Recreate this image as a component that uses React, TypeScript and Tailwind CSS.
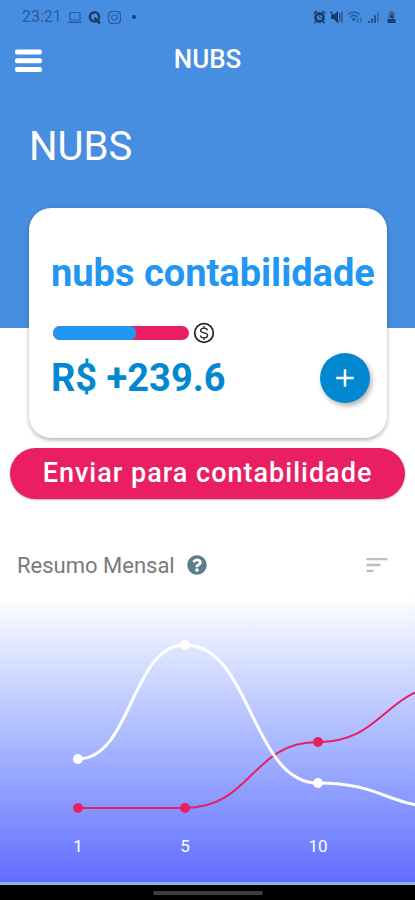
import { FaInstagram, FaQuestionCircle } from "react-icons/fa";
import { MdAdd, MdSort } from "react-icons/md";

const BASELINE = 255;

const POINTS_X = [78, 185, 318, 452];

const DAYS = [
  { label: "1", x: 78 },
  { label: "5", x: 185 },
  { label: "10", x: 318 }
];

const SERIES = [
  { color: "#e91e63", width: 2, values: [211, 211, 145, 88] },
  { color: "#ffffff", width: 3, values: [162, 48, 186, 211] }
];

function smoothPath(values: number[]) {
  return values
    .map((y, i) => {
      const x = POINTS_X[i];
      if (i === 0) return `M${x} ${y}`;
      const mid = (POINTS_X[i - 1] + x) / 2;
      return `C${mid} ${values[i - 1]} ${mid} ${y} ${x} ${y}`;
    })
    .join(" ");
}

function StatusBar() {
  return (
    <div className="flex h-[34px] items-center justify-between pr-[18px] pl-[22px] text-[#2c5c9b]">
      <div className="flex items-center gap-1.5">
        <span className="text-base">23:21</span>
        <svg width="14" height="13" viewBox="0 0 14 13" fill="none" stroke="currentColor" aria-hidden="true">
          <rect x="2" y="1.500" width="10" height="7.500" rx="1" strokeWidth="1.200" />
          <path d="M0.500 11.300h13" strokeWidth="1.600" />
        </svg>
        <svg width="13" height="13" viewBox="0 0 12 12" fill="none" stroke="#1b3c6b" aria-hidden="true">
          <circle cx="6" cy="5.5" r="4.3" strokeWidth="2.2" />
          <path d="M6 6.5 L11 11.5" strokeWidth="2.4" />
        </svg>
        <FaInstagram size={15} />
        <span className="ml-1 size-1 rounded-full bg-[#1b3c6b]" />
      </div>
      <div className="flex items-center gap-1 text-[#1b3c6b]">
        <svg width="13" height="14" viewBox="0 0 13 14" fill="none" stroke="currentColor" aria-hidden="true">
          <circle cx="6.5" cy="7.5" r="4" strokeWidth="2.8" />
          <path d="M.8 3.500L3.800 1.200M12.200 3.500L9.200 1.200M2.800 11.500L1.500 13.200M10.200 11.500l1.300 1.700" strokeWidth="1.700" />
          <path d="M6.500 5.500v2.200h1.700" strokeWidth="1" />
        </svg>
        <svg width="13" height="14" viewBox="0 0 13 14" aria-hidden="true">
          <path d="M1 5h2.500L8 1v12L3.500 9H1z" fill="currentColor" />
          <path d="M.5 1.500l8 11" stroke="currentColor" strokeWidth="1.300" />
          <path d="M9.800 3v8M12 1.500v11" stroke="#23508c" strokeWidth="1.300" />
        </svg>
        <svg width="16" height="14" viewBox="0 0 17 14" fill="none" stroke="#2c5c9b" aria-hidden="true">
          <path d="M1 4.500c4-3.600 8.500-3.600 12.500 0M3.200 7c2.600-2.300 5.500-2.300 8.100 0" strokeWidth="1.700" />
          <path d="M5 8.500h4.500L7.200 11.500z" fill="#2c5c9b" strokeWidth="1" />
          <path d="M11.500 8v5M10 11.500l1.500 1.500M14.500 13V8M16 9.500L14.500 8" strokeWidth="1" />
        </svg>
        <svg width="13" height="14" viewBox="0 0 13 14" aria-hidden="true">
          <path d="M1 11h2v2H1zM4 8.500h2V13H4zM7 5.500h2V13H7z" fill="#23508c" />
          <path d="M10 2h2v11h-2z" fill="#3b70b5" />
        </svg>
        <svg className="ml-0.5" width="11" height="14" viewBox="0 0 11 14" aria-hidden="true">
          <path d="M4 1h3v1.500h1.500V8h-6V2.500H4z" fill="#3b6199" />
          <path d="M1.500 9h8v4h-8z" fill="currentColor" />
          <path d="M6.500 3.500L4 7.500h2l-.5 3L8 6.500H6z" fill="#16335c" />
        </svg>
      </div>
    </div>
  );
}

function AppBar() {
  return (
    <div className="grid h-[50px] grid-cols-[28px_1fr_28px] items-center px-[14px]">
      <button type="button" aria-label="Menu" className="pt-1">
        <svg width="29" height="24" viewBox="0 0 29 24" fill="white">
          <rect x="1" y="0.500" width="27" height="5" rx="2" />
          <rect x="1" y="9.200" width="27" height="5" rx="2" />
          <rect x="1" y="18" width="27" height="5" rx="2" />
        </svg>
      </button>
      <h1 className="text-center text-[26px] leading-8 font-medium text-white">NUBS</h1>
    </div>
  );
}

function BalanceCard() {
  return (
    <section className="mr-7 ml-[29px] -mt-[120px] rounded-[22px] bg-white px-[22px] pt-[42px] pb-[34px] shadow-[0_2px_4px_rgba(0,0,0,0.3)]">
      <h3 className="text-[38px] leading-[46px] font-bold whitespace-nowrap text-[#2196f3]">nubs contabilidade</h3>
      <div className="mt-[25px] flex h-6 items-center gap-1">
        <div className="ml-0.5 h-[14px] w-[136px] overflow-hidden rounded-full bg-[#e91e63]">
          <div className="h-full rounded-r-md bg-[#2196f3]" style={{ width: "61%" }} />
        </div>
        <svg width="22" height="22" viewBox="0 0 22 22" fill="none" stroke="#222" aria-hidden="true">
          <circle cx="11" cy="11" r="9.300" strokeWidth="1.700" />
          <path
            d="M14.500 8.300C14.200 6.900 13 6.200 11 6.200c-2 0-3.400.8-3.400 2.200 0 3.200 7 1.700 7 5 0 1.600-1.500 2.400-3.500 2.400-2 0-3.500-.8-3.700-2.300M11 4v2.200M11 15.800V18"
            strokeWidth="1.300"
          />
        </svg>
      </div>
      <div className="mt-[7px] flex items-center justify-between">
        <p className="text-[38px] leading-[52px] font-bold text-[#0288d1]">R$ +239.6</p>
        <button
          type="button"
          aria-label="Adicionar"
          className="-mr-[5px] flex size-[50px] items-center justify-center rounded-full bg-[#0288d1] text-white shadow-[2px_3px_5px_rgba(0,0,0,0.3)]"
        >
          <MdAdd size={30} />
        </button>
      </div>
    </section>
  );
}

function MonthlyChart() {
  return (
    <div className="h-[285px] overflow-hidden bg-linear-to-b from-white to-[#636bff]">
      <svg width="480" height="285" viewBox="0 0 480 285" role="img" aria-label="Resumo mensal">
        {SERIES.map((serie) => (
          <g key={serie.color}>
            <path d={smoothPath(serie.values)} fill="none" stroke={serie.color} strokeWidth={serie.width} />
            {serie.values.map((y, i) => (
              <circle key={POINTS_X[i]} cx={POINTS_X[i]} cy={y} r="5" fill={serie.color} />
            ))}
          </g>
        ))}
        {DAYS.map((day) => (
          <text key={day.label} x={day.x} y={BASELINE} textAnchor="middle" fontSize="17" fill="white">
            {day.label}
          </text>
        ))}
      </svg>
    </div>
  );
}

export default function App() {
  return (
    <div className="flex min-h-screen flex-col overflow-hidden bg-white font-[Roboto,sans-serif]">
      <header className="bg-[#478ee0] pb-[157px]">
        <StatusBar />
        <AppBar />
        <h2 className="mt-[39px] px-[29px] text-[40px] leading-[48px] text-white">NUBS</h2>
      </header>

      <main className="flex-1">
        <BalanceCard />
        <div className="px-[10px] pt-[10px]">
          <button
            type="button"
            className="h-[51px] w-full rounded-full bg-[#e91e63] text-[27px] font-medium tracking-[1px] whitespace-nowrap text-white shadow-[0_1px_2px_rgba(0,0,0,0.3)]"
          >
            Enviar para contabilidade
          </button>
        </div>

        <div className="mt-[50px] mb-4 flex h-8 items-center pr-6 pl-[17px]">
          <h3 className="text-[22px] text-[#7a7a7a]">Resumo Mensal</h3>
          <button type="button" aria-label="Ajuda" className="ml-3 text-[#5c7d8b]">
            <FaQuestionCircle size={20} />
          </button>
          <button type="button" aria-label="Ordenar" className="ml-auto text-[#bdbdbd]">
            <MdSort size={28} />
          </button>
        </div>
        <MonthlyChart />
      </main>

      <footer className="flex h-[18px] items-center justify-center border-t-[3px] border-[#8ab4f0] bg-black">
        <div className="h-1 w-[110px] rounded-full bg-[#3d3d3d]" />
      </footer>
    </div>
  );
}
